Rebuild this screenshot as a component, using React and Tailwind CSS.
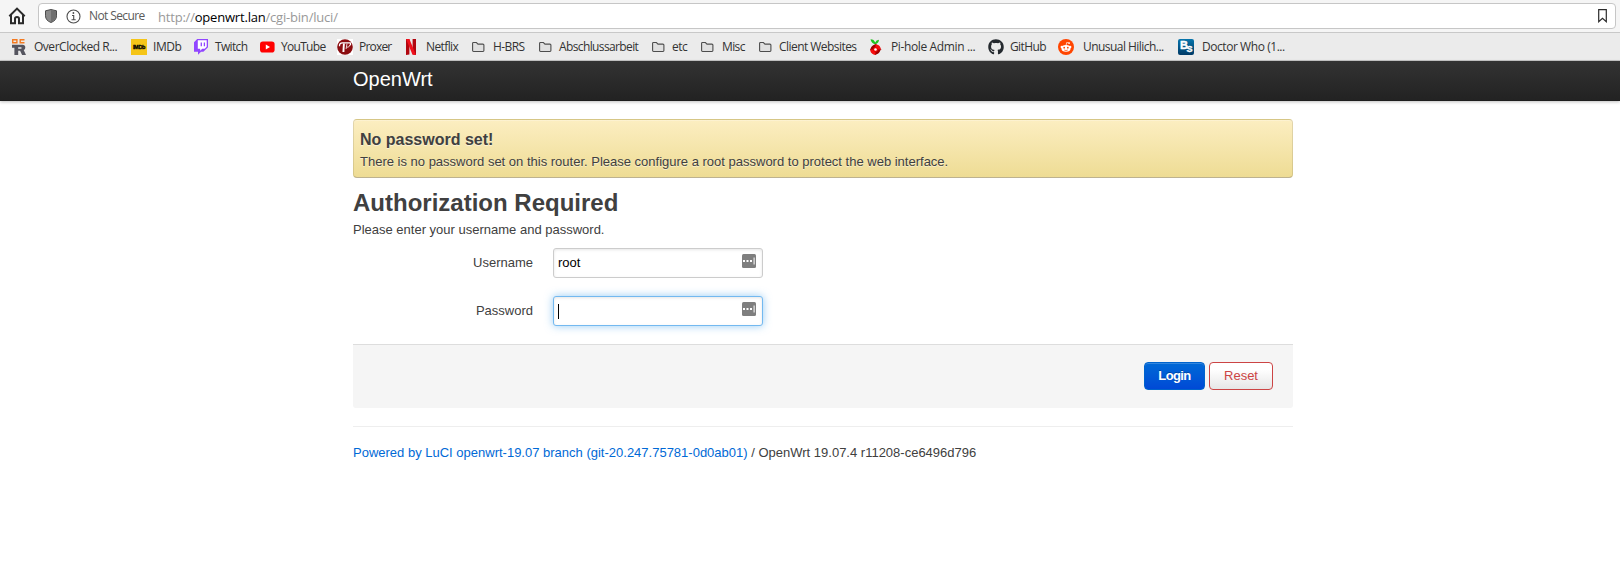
import React from 'react';
import { FaGithub } from 'react-icons/fa';

const Folder = () => (
  <svg width="14" height="12" viewBox="0 0 14 12" className="block">
    <path d="M.6 9.6V2.200Q.6 1.500 1.400 1.500h3l1.600 1.600h4.900q1 0 1 1v5.500q0 .9-.9.9H1.500q-.9 0-.9-.9z" fill="#e0e0e0" stroke="#4d4d4d" strokeWidth="1.1" />
  </svg>
);

const OverClocked = () => (
  <svg width="16" height="16" viewBox="0 0 16 16" className="block">
    <path d="M.7.7h4.200v3.100H.7zM12.500.7H8.200v3.100h4.300" fill="none" stroke="#f47a20" strokeWidth="1.4" />
    <path d="M0 5.800h10.400q2.900 0 2.900 2.700 0 2-1.600 2.600L14 16h-3.900l-2-4.200H6.200V16H2.400V8.800H0zm6.200 2.500v1.400h2.700q.8 0 .8-.7t-.8-.7z" fill="#55555f" />
  </svg>
);

const Imdb = () => (
  <span className="flex h-4 w-4 items-center justify-center bg-[#f5c518] font-['Liberation_Sans'] text-[5.5px] font-bold tracking-[-0.3px] text-black [-webkit-text-stroke:0.3px_#000]">IMDb</span>
);

const Twitch = () => (
  <svg width="14" height="16" viewBox="0 0 14 16" className="block">
    <path d="M3.2 0H14v8.2l-4.6 4.6H7L4 15.8v-3H0V3.2z" fill="#9146ff" />
    <path d="M3.8 1.3h8.9v6.4l-2 2H8.2l-2 2v-2H3.8z" fill="#fff" />
    <path d="M7.3 3.4v3.8M10.4 3.4v3.8" stroke="#9146ff" strokeWidth="1.3" />
  </svg>
);

const YouTube = () => (
  <svg width="15" height="16" viewBox="0 0 15 16" className="block">
    <rect x="0" y="2.6" width="14.6" height="11" rx="2.8" fill="#f00" />
    <path d="M5.8 5.6v5l4.2-2.5z" fill="#fff" />
  </svg>
);

const Proxer = () => (
  <svg width="16" height="16" viewBox="0 0 16 16" className="block">
    <path d="M0 0h16v16H0z" fill="#fff" />
    <circle cx="8" cy="8" r="7.800" fill="#8b0d10" />
    <path d="M2.500 7.200Q2.200 3.900 5.500 3.900h7.800q.7 1.500-.3 2.300" fill="none" stroke="#fff" strokeWidth="1.300" />
    <path d="M6.900 4.500l-.5 8.500" stroke="#fff" strokeWidth="1.900" />
    <path d="M10 4.500l-.9 5.500M9.500 8.300q3 .3 3.300-2.300" fill="none" stroke="#e9cccc" strokeWidth="1" />
  </svg>
);

const Netflix = () => (
  <svg width="10" height="16" viewBox="0 0 10 16" className="block">
    <path d="M0 0h3.4v15.6L0 16zM6.6 0H10v16l-3.4-.4z" fill="#b1060f" />
    <path d="M0 0h3.4L10 16l-3.6-.4z" fill="#f0101c" />
  </svg>
);

const PiHole = () => (
  <svg width="12" height="16" viewBox="0 0 12 16" className="block">
    <path d="M.5.2q3.600.1 4.700 3.300Q6.100 1 9 .8 8.900 4 5.500 5.200 1.500 4.500.5.2z" fill="#1fc41f" />
    <path d="M5.500 4.900l5.400 5.600-5.400 5.400-5.400-5.400z" fill="#a00000" stroke="#a00000" strokeWidth=".5" />
    <circle cx="5.500" cy="10.500" r="4.800" fill="#a00000" />
    <path d="M5.500 5.200a5.300 5.300 0 0 1 5.300 5.300H8.300L5.500 8zM5.500 15.800a5.300 5.300 0 0 1-5.300-5.300H3l2.500 2.500z" fill="#f60d0d" />
    <circle cx="5.500" cy="10.500" r="2.500" fill="#e00" />
    <circle cx="5.500" cy="10.500" r="1.300" fill="#fff" />
  </svg>
);

const Reddit = () => (
  <svg width="16" height="16" viewBox="0 0 16 16" className="block">
    <circle cx="8" cy="8" r="8" fill="#ff4500" />
    <circle cx="3.800" cy="8" r="1.200" fill="#fff" />
    <circle cx="12.200" cy="8" r="1.200" fill="#fff" />
    <ellipse cx="8" cy="9.400" rx="4.500" ry="3.300" fill="#fff" />
    <path d="M8 6.500l.7-3 2.200.5" fill="none" stroke="#fff" strokeWidth=".7" />
    <circle cx="11.100" cy="4.100" r=".9" fill="#fff" />
    <circle cx="6.200" cy="8.700" r=".9" fill="#ff4500" />
    <circle cx="9.800" cy="8.700" r=".9" fill="#ff4500" />
    <path d="M6.200 11q1.800 1.100 3.600 0" fill="none" stroke="#ff4500" strokeWidth=".7" />
  </svg>
);

const BurningSeries = () => (
  <span className="flex h-4 w-4 rounded-[2px] bg-linear-to-b from-[#0876ac] to-[#003a66] pl-[2px] font-['Liberation_Sans'] font-bold leading-none text-white">
    <span className="pt-[1px] text-[11px] leading-[11px] [-webkit-text-stroke:0.4px_#fff]">B</span>
    <span className="-ml-[1.5px] pt-[6px] text-[9px] leading-[9px] [-webkit-text-stroke:0.4px_#fff]">S</span>
  </span>
);

const bookmarks = [
  { label: 'OverClocked R...', icon: <OverClocked />, slot: 'w-[22px]', cell: 'w-[97px]', track: 'tracking-[-0.48px]' },
  { label: 'IMDb', icon: <Imdb />, slot: 'w-[22px]', cell: 'w-[41px]', track: 'tracking-[-0.45px]' },
  { label: 'Twitch', icon: <Twitch />, slot: 'w-[21px]', cell: 'w-[45px]', track: 'tracking-[-0.65px]' },
  { label: 'YouTube', icon: <YouTube />, slot: 'w-[21px]', cell: 'w-[56px]', track: 'tracking-[-0.7px]' },
  { label: 'Proxer', icon: <Proxer />, slot: 'w-[22px]', cell: 'w-[47px]', track: 'tracking-[-0.8px]' },
  { label: 'Netflix', icon: <Netflix />, slot: 'w-[20px]', cell: 'w-[46px]', track: 'tracking-[-0.6px]' },
  { label: 'H-BRS', icon: <Folder />, slot: 'w-[21px]', cell: 'w-[46px]', track: 'tracking-[-0.6px]' },
  { label: 'Abschlussarbeit', icon: <Folder />, slot: 'w-[20px]', cell: 'w-[93px]', track: 'tracking-[-0.62px]' },
  { label: 'etc', icon: <Folder />, slot: 'w-[20px]', cell: 'w-[29px]', track: 'tracking-[-0.5px]' },
  { label: 'Misc', icon: <Folder />, slot: 'w-[21px]', cell: 'w-[37px]', track: 'tracking-[-0.6px]' },
  { label: 'Client Websites', icon: <Folder />, slot: 'w-[20px]', cell: 'w-[91px]', track: 'tracking-[-0.55px]' },
  { label: 'Pi-hole Admin ...', icon: <PiHole />, slot: 'w-[21px]', cell: 'w-[97px]', track: 'tracking-[-0.37px]' },
  { label: 'GitHub', icon: <FaGithub size={16} color="#24292e" className="block" />, slot: 'w-[22px]', cell: 'w-[48px]', track: 'tracking-[-0.6px]' },
  { label: 'Unusual Hilich...', icon: <Reddit />, slot: 'w-[25px]', cell: 'w-[95px]', track: 'tracking-[-0.54px]' },
  { label: 'Doctor Who (1...', icon: <BurningSeries />, slot: 'w-[24px]', cell: 'w-[90px]', track: 'tracking-[-0.44px]' },
];

const FieldBadge = () => (
  <svg width="14" height="14" viewBox="0 0 14 14" className="block">
    <rect width="14" height="14" rx="1.500" fill="#7f7f7f" />
    <path d="M1 6h2v2H1zM4.500 6h2v2h-2zM8 6h2v2H8zM11.600 3.500h1v7h-1z" fill="#fff" />
  </svg>
);

function Field({ label, children, focused }) {
  return (
    <div className="flex h-[30px] items-center">
      <label className="w-[180px] text-right leading-[18px]">{label}</label>
      <div
        className={
          'ml-5 flex h-[30px] w-[210px] items-start rounded-[3px] border bg-white pl-1 pr-[6px] pt-[5px] ' +
          (focused
            ? 'border-[#73b9f0] shadow-[inset_0_1px_3px_rgba(0,0,0,0.1),0_0_8px_rgba(82,168,236,0.6)]'
            : 'border-[#ccc] shadow-[inset_0_1px_3px_rgba(0,0,0,0.1)]')
        }
      >
        <div className="flex-1 leading-[18px] text-black">{children}</div>
        <FieldBadge />
      </div>
    </div>
  );
}

export default function App() {
  return (
    <div className="h-[581px] w-[1620px] overflow-hidden bg-white font-['Liberation_Sans',Arial,sans-serif] text-[13px] text-[#404040]">
      <div className="flex h-[33px] items-start border-b border-[#c8c8c8] bg-[#f5f5f5] pt-[3px] font-['Open_Sans',sans-serif]">
        <svg width="38" height="26" viewBox="0 0 38 26" className="block">
          <path d="M9.300 13.200L17 5.600l7.700 7.600M11 12v8.200h4v-4.500q0-1.700 2-1.700t2 1.700v4.500h4V12" fill="none" stroke="#2b2b2b" strokeWidth="2" />
        </svg>
        <div className="flex h-[26px] w-[1578px] items-center rounded-[4px] border border-[#c6c6c6] bg-white pl-[6px] pr-[8px]">
          <svg width="12" height="14" viewBox="0 0 12 14" className="block">
            <path d="M6 .5l5.500 1.300v5Q11.500 11.500 6 13.500 .5 11.500.5 6.800v-5z" fill="#8a8a8a" stroke="#4c4c4c" />
            <path d="M6 1v12q5-2 5-6.200V2.200z" fill="#707070" />
          </svg>
          <svg width="15" height="15" viewBox="0 0 15 15" className="ml-[9px] block">
            <circle cx="7.500" cy="7.500" r="6.500" fill="none" stroke="#4d4d4d" strokeWidth="1.100" />
            <path d="M6 6.500h1.700v4M5.500 10.700h4.200" fill="none" stroke="#4d4d4d" strokeWidth="1.100" />
            <circle cx="7.400" cy="4" r=".9" fill="#4d4d4d" />
          </svg>
          <span className="ml-[8px] w-[69px] whitespace-nowrap text-[12px] leading-4 tracking-[-0.6px] text-[#5a5a5a]">Not Secure</span>
          <span className="flex-1 whitespace-nowrap pt-[2px] text-[13px] leading-4 tracking-[-0.2px] text-[#999]">
            http://<span className="text-black">openwrt.lan</span>/cgi-bin/luci/
          </span>
          <svg width="9" height="14" viewBox="0 0 9 14" className="block">
            <path d="M.7.7h7.600v12L4.500 9.300.7 12.700z" fill="none" stroke="#2b2b2b" strokeWidth="1.200" />
          </svg>
        </div>
      </div>

      <div className="flex h-[28px] items-center border-b border-[#c8c8c8] bg-[#ebebeb] pl-[12px] pt-px font-['Open_Sans',sans-serif] text-[12px] text-[#333]">
        {bookmarks.map((b) => (
          <div key={b.label} className="flex shrink-0 items-center">
            <span className={'shrink-0 ' + b.slot}>{b.icon}</span>
            <span className={'shrink-0 whitespace-nowrap leading-4 ' + b.cell + ' ' + b.track}>{b.label}</span>
          </div>
        ))}
      </div>

      <header className="h-[40px] bg-linear-to-b from-[#333] to-[#222] pl-[353px] shadow-[0_1px_3px_rgba(0,0,0,0.25),inset_0_-1px_0_rgba(0,0,0,0.1)]">
        <div className="pt-[8px] text-[20px] leading-[20px] text-white">OpenWrt</div>
      </header>

      <main className="ml-[353px] w-[940px] pt-[18px]">
        <div className="h-[59px] rounded-[4px] border border-black/10 border-b-black/25 bg-linear-to-b from-[#fceec1] to-[#eedc94] pl-[6px] pt-[10px] shadow-[inset_0_1px_0_rgba(255,255,255,0.25)] [text-shadow:0_1px_0_rgba(255,255,255,0.5)]">
          <h4 className="text-[16px] font-bold leading-[20px]">No password set!</h4>
          <p className="mt-[3px] leading-[18px]">There is no password set on this router. Please configure a root password to protect the web interface.</p>
        </div>

        <h2 className="mt-[7px] text-[24px] font-bold leading-[36px]">Authorization Required</h2>
        <p className="leading-[18px]">Please enter your username and password.</p>

        <div className="mt-[9px] flex flex-col gap-[18px]">
          <Field label="Username">root</Field>
          <Field label="Password" focused>
            <div className="mt-[2px] h-[15px] w-px bg-black" />
          </Field>
        </div>

        <div className="mt-[18px] flex h-[64px] items-start justify-end gap-1 rounded-b-[3px] border-t border-[#ddd] bg-[#f5f5f5] pr-5 pt-[17px]">
          <button className="h-[28px] w-[61px] rounded-[4px] border border-[#0064cd] bg-linear-to-b from-[#0069d6] to-[#0049d6] pb-px font-bold tracking-[-0.6px] text-white shadow-[inset_0_1px_0_rgba(255,255,255,0.2)] [text-shadow:0_-1px_0_rgba(0,0,0,0.25)]">Login</button>
          <button className="h-[28px] w-[64px] rounded-[4px] border border-[#c44] bg-linear-to-b from-white from-25% to-[#e6e6e6] pb-px text-[#c44]">Reset</button>
        </div>

        <footer className="mt-[18px] border-t border-[#eee] pt-[17px] leading-[18px]">
          <a className="text-[#0069d6]">Powered by LuCI openwrt-19.07 branch (git-20.247.75781-0d0ab01)</a> / OpenWrt 19.07.4 r11208-ce6496d796
        </footer>
      </main>
    </div>
  );
}
